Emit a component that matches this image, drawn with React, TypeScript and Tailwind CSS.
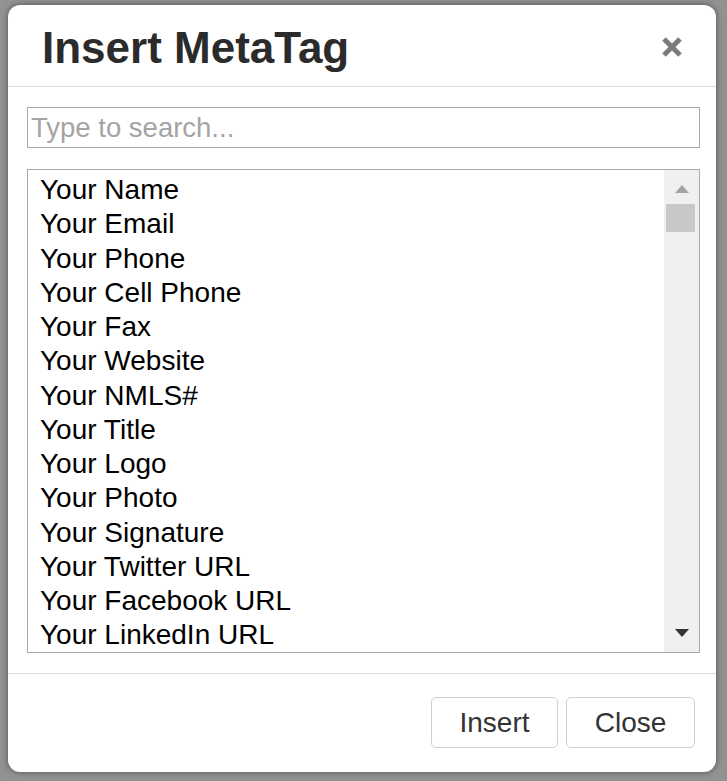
import React from "react";

const items = [
  "Your Name",
  "Your Email",
  "Your Phone",
  "Your Cell Phone",
  "Your Fax",
  "Your Website",
  "Your NMLS#",
  "Your Title",
  "Your Logo",
  "Your Photo",
  "Your Signature",
  "Your Twitter URL",
  "Your Facebook URL",
  "Your LinkedIn URL",
];

export default function App() {
  return (
    <div
      className="w-[727px] h-[781px] bg-[#929292] pt-[5px] pl-[8px] overflow-hidden"
      style={{ fontFamily: '"Liberation Sans", Arial, sans-serif' }}
    >
      <div className="w-[708px] h-[767px] bg-white rounded-[12px] shadow-[0_0_6px_rgba(0,0,0,0.45)] flex flex-col">
        {/* Header */}
        <div className="h-[82px] border-b border-[#dcdcdc] flex items-start justify-between pl-[34px] pr-[33px] pt-[19px]">
          <h1 className="text-[44px] leading-[48px] font-bold text-[#2b2b2b]">
            Insert MetaTag
          </h1>
          <svg width="22" height="22" viewBox="0 0 22 22" className="mt-[12px]">
            <path d="M3 3 L19 19 M19 3 L3 19" stroke="#7b7b7b" strokeWidth="5" strokeLinecap="butt" />
          </svg>
        </div>

        {/* Body */}
        <div className="pl-[19px] pr-[16px] pt-[20px] pb-[20px] border-b border-[#dcdcdc]">
          <div className="h-[41px] border border-[#a9a9a9] flex items-center pl-[3px]">
            <span className="text-[27.5px] text-[#a4a4a4]">Type to search...</span>
          </div>
          <div className="mt-[21px] h-[484px] border border-[#a9a9a9] flex overflow-hidden">
            <div className="flex-1 pl-[12px] pt-[3px]">
              {items.map((t) => (
                <div key={t} className="text-[28px] leading-[34.25px] text-black whitespace-nowrap">
                  {t}
                </div>
              ))}
            </div>
            <div className="w-[35px] bg-[#f0f0f0] flex flex-col items-center">
              <div className="h-[34px] w-full flex items-center justify-center pt-[4px]">
                <svg width="14" height="8" viewBox="0 0 14 8">
                  <path d="M7 0 L14 8 L0 8 Z" fill="#a3a3a3" />
                </svg>
              </div>
              <div className="w-[29px] h-[28px] bg-[#c8c8c8] ml-[-2px]" />
              <div className="flex-1" />
              <div className="h-[34px] w-full flex items-center justify-center pb-[4px]">
                <svg width="14" height="8" viewBox="0 0 14 8">
                  <path d="M0 0 L14 0 L7 8 Z" fill="#333333" />
                </svg>
              </div>
            </div>
          </div>
        </div>

        {/* Footer */}
        <div className="flex justify-end gap-[8px] pr-[21px] pt-[23px]">
          <button className="w-[127px] h-[51px] border border-[#cfcfcf] rounded-[5px] bg-white text-[28px] text-[#333]">
            Insert
          </button>
          <button className="w-[129px] h-[51px] border border-[#cfcfcf] rounded-[5px] bg-white text-[28px] text-[#333]">
            Close
          </button>
        </div>
      </div>
    </div>
  );
}
